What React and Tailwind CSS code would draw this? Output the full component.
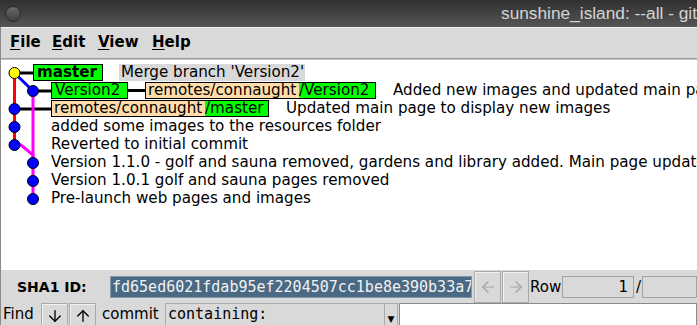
import React from 'react';
import { ArrowLeft, ArrowRight, ArrowDown, ArrowUp } from 'lucide-react';

const sans = { fontFamily: '"DejaVu Sans", sans-serif' };
const mono = { fontFamily: '"DejaVu Sans Mono", monospace' };

// graph drawing: row centres relative to the list top
const rowY = (i) => 13 + 18 * i;
const C0 = 13.5;
const C1 = 32;

const Node = ({ x, y, fill = '#0000ff' }) => (
  <circle cx={x} cy={y} r="5.5" fill={fill} stroke="#000" strokeWidth="1" />
);

const Graph = () => (
  <svg className="absolute left-0 top-0" width="52" height="150">
    {/* connectors to labels */}
    <line x1={C0} y1={rowY(0)} x2="33" y2={rowY(0)} stroke="#000" strokeWidth="3" />
    <line x1={C1} y1={rowY(1)} x2="51" y2={rowY(1)} stroke="#000" strokeWidth="3" />
    <line x1={C0} y1={rowY(2)} x2="51" y2={rowY(2)} stroke="#000" strokeWidth="3" />
    {/* branches */}
    <line x1={C0} y1={rowY(0)} x2={C0} y2={rowY(4)} stroke="#ff0000" strokeWidth="3" />
    <line x1={C0} y1={rowY(0)} x2={C1} y2={rowY(1)} stroke="#0000ff" strokeWidth="3" />
    <line x1={C1} y1={rowY(1)} x2={C1} y2={rowY(7)} stroke="#ff00ff" strokeWidth="3" />
    <polyline
      points={`${C0},${rowY(4)} 20,${rowY(4)} ${C1},${rowY(4) + 10} ${C1},${rowY(5)}`}
      fill="none"
      stroke="#ff00ff"
      strokeWidth="3"
    />
    <Node x={C0} y={rowY(0)} fill="#ffff00" />
    <Node x={C1} y={rowY(1)} />
    <Node x={C0} y={rowY(2)} />
    <Node x={C0} y={rowY(3)} />
    <Node x={C0} y={rowY(4)} />
    <Node x={C1} y={rowY(5)} />
    <Node x={C1} y={rowY(6)} />
    <Node x={C1} y={rowY(7)} />
  </svg>
);

const RemoteTag = ({ branch, greenW }) => (
  <div className="shrink-0 flex h-[17px] border border-black leading-[15px] whitespace-nowrap">
    <span className="shrink-0 w-[153px] bg-[#ffddaa] pl-[2px]">remotes/connaught</span>
    <span className="shrink-0 bg-[#00ff00]" style={{ width: greenW }}>/{branch}</span>
  </div>
);

const CommitList = () => (
  <div className="relative flex-1 bg-white border-t border-[#c8c8c8] pt-[4px] text-[15.15px] text-black overflow-hidden">
    <Graph />
    <div className="flex h-[18px] items-start pl-[32px]">
      <div className="shrink-0 w-[70px] h-[17px] border border-black bg-[#00ff00] pl-[3px] font-bold leading-[15px]">master</div>
      <div className="shrink-0 ml-[16px] h-[17px] bg-[#d9d9d9] pl-[2px] pr-[1px] leading-[16px] whitespace-nowrap">Merge branch 'Version2'</div>
    </div>
    <div className="flex h-[18px] items-start pl-[50px]">
      <div className="shrink-0 w-[77px] h-[17px] border border-black bg-[#00ff00] pl-[3px] leading-[15px]">Version2</div>
      <div className="shrink-0 mt-[7px] w-[17px] h-[3px] bg-black" />
      <RemoteTag branch="Version2" greenW="76px" />
      <span className="shrink-0 ml-[17px] whitespace-nowrap leading-[17px]">Added new images and updated main page</span>
    </div>
    <div className="flex h-[18px] items-start pl-[50px]">
      <RemoteTag branch="master" greenW="63px" />
      <span className="shrink-0 ml-[17px] whitespace-nowrap leading-[17px]">Updated main page to display new images</span>
    </div>
    {[
      'added some images to the resources folder',
      'Reverted to initial commit',
      'Version 1.1.0 - golf and sauna removed, gardens and library added. Main page updated',
      'Version 1.0.1 golf and sauna pages removed',
      'Pre-launch web pages and images',
    ].map((msg) => (
      <div key={msg} className="h-[18px] pl-[50px] whitespace-nowrap leading-[17px]">{msg}</div>
    ))}
  </div>
);

const TkButton = ({ children, className = '' }) => (
  <div className={`shrink-0 flex items-center justify-center bg-[#d9d9d9] border border-[#a9a9a9] shadow-[inset_1px_1px_0_#f2f2f2] ${className}`}>
    {children}
  </div>
);

const MenuItem = ({ first, rest, w }) => (
  <div className={`${w} font-bold`}>
    <span className="underline underline-offset-2 decoration-1">{first}</span>{rest}
  </div>
);

export default function App() {
  return (
    <div className="w-[697px] h-[325px] overflow-hidden flex flex-col bg-[#d9d9d9]" style={sans}>
      {/* window title bar */}
      <div className="h-[27px] shrink-0 flex items-center overflow-hidden bg-linear-to-b from-[#303030] to-[#565656]">
        <div className="shrink-0 ml-[5px] w-[16px] h-[16px] rounded-full bg-linear-to-b from-[#6a6a6a] to-[#3e3e3e] border border-[#2a2a2a]" />
        <div
          className="shrink-0 ml-[480px] whitespace-nowrap text-[17.3px] text-[#d4d4d4]"
          style={{ fontFamily: '"Liberation Sans", Arial, sans-serif' }}
        >
          sunshine_island: --all - gitk
        </div>
      </div>

      <div className="flex-1 flex flex-col border-l border-[#8a8a8a]">
        {/* menu bar */}
        <div className="h-[32px] shrink-0 flex items-center pl-[9px] pb-[1px] text-[15px] text-black border-t border-[#efefef] border-b border-b-[#9a9a9a]">
          <MenuItem first="F" rest="ile" w="w-[42px]" />
          <MenuItem first="E" rest="dit" w="w-[46px]" />
          <MenuItem first="V" rest="iew" w="w-[54px]" />
          <MenuItem first="H" rest="elp" w="w-[50px]" />
        </div>

        <CommitList />

        {/* details bar */}
        <div className="h-[55px] shrink-0 flex flex-col text-[15px] text-black">
          <div className="h-[33px] flex items-center pt-[1px]">
            <div className="shrink-0 ml-[16px] w-[93px] text-[14px] font-bold">SHA1 ID:</div>
            <div className="shrink-0 w-[362px] h-[22px] bg-[#4a6984] border border-[#8497aa] overflow-hidden pl-[1px] leading-[20px] text-[#f2f2f2] whitespace-nowrap" style={mono}>
              fd65ed6021fdab95ef2204507cc1be8e390b33a7
            </div>
            <TkButton className="ml-[2px] w-[27px] h-[32px]">
              <ArrowLeft size={18} strokeWidth={1.6} color="#a3a3a3" />
            </TkButton>
            <TkButton className="ml-[1px] w-[27px] h-[32px]">
              <ArrowRight size={18} strokeWidth={1.6} color="#a3a3a3" />
            </TkButton>
            <div className="shrink-0 ml-[1px] w-[32px]">Row</div>
            <div className="shrink-0 w-[72px] h-[22px] border border-[#a3a3a3] text-right pr-[5px] leading-[20px]">1</div>
            <div className="shrink-0 w-[8px] pl-[2px]">/</div>
            <div className="flex-1 h-[22px] border border-[#a3a3a3]" />
          </div>
          <div className="flex-1 flex items-start">
            <div className="shrink-0 ml-[2px] w-[38px] leading-[22px]">Find</div>
            <TkButton className="w-[27px] h-[26px]">
              <ArrowDown size={18} strokeWidth={1.8} color="#000" />
            </TkButton>
            <TkButton className="ml-[1px] w-[27px] h-[26px]">
              <ArrowUp size={18} strokeWidth={1.8} color="#000" />
            </TkButton>
            <div className="shrink-0 ml-[6px] w-[63px] leading-[22px]">commit</div>
            <div className="shrink-0 w-[233px] h-[26px] flex border border-[#a9a9a9]">
              <div className="flex-1 pl-[2px] leading-[20px]" style={mono}>containing:</div>
              <div className="w-[13px] border-l border-[#a9a9a9] flex items-end justify-center pb-[2px] text-[9px]">▼</div>
            </div>
            <div className="ml-[1px] flex-1 h-[26px] bg-white border border-[#8a8a8a]" />
          </div>
        </div>
      </div>
    </div>
  );
}
